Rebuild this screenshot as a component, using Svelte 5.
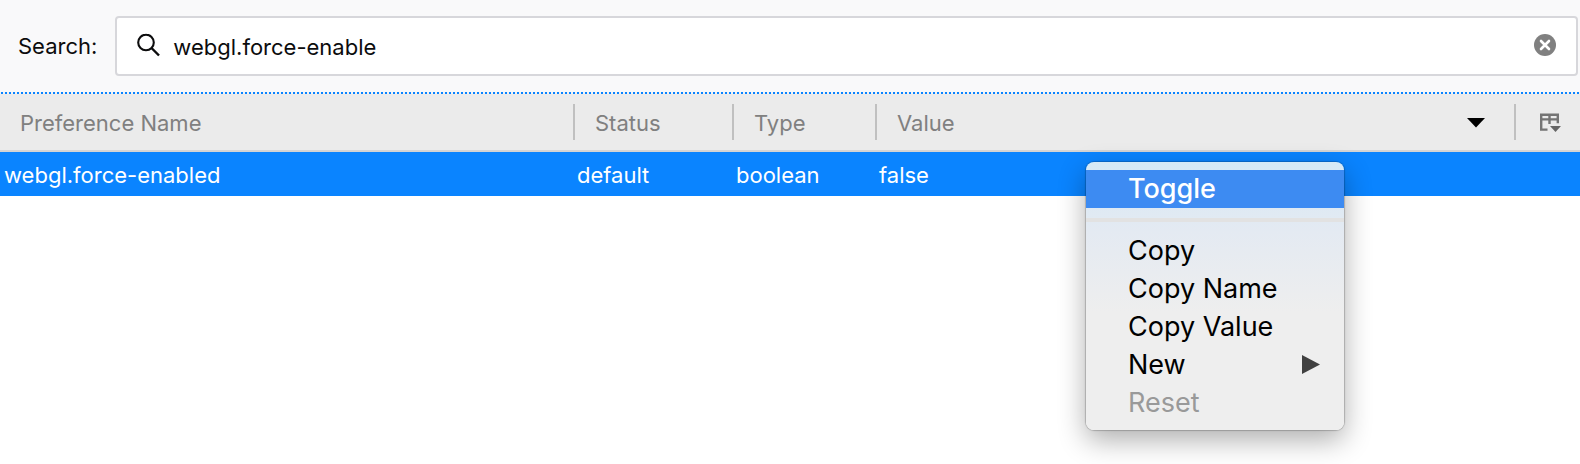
<script>
  let query = $state('webgl.force-enable');
  const rows = [{ name: 'webgl.force-enabled', status: 'default', type: 'boolean', value: 'false' }];
</script>

<main>
  <form class="search" onsubmit={(e) => e.preventDefault()}>
    <label for="query">Search:</label>
    <div class="field">
      <svg width="24" height="24" viewBox="0 0 24 24" aria-hidden="true">
        <circle cx="9" cy="9.5" r="7.8" fill="none" stroke="#0c0c0d" stroke-width="2.1" />
        <path d="M14.5 15l7.5 7.5" stroke="#0c0c0d" stroke-width="2.4" />
      </svg>
      <input id="query" type="text" spellcheck="false" bind:value={query} />
      <button type="button" class="clear" aria-label="Clear" onclick={() => (query = '')}>
        <svg width="22" height="22" viewBox="0 0 22 22">
          <circle cx="11" cy="11" r="11" fill="#808080" />
          <path d="M7 7l8 8M15 7l-8 8" stroke="#fff" stroke-width="2.6" stroke-linecap="round" />
        </svg>
      </button>
    </div>
  </form>

  <div class="focus-line"></div>

  <table>
    <colgroup>
      <col class="c-name" /><col class="c-status" /><col class="c-type" /><col /><col class="c-pick" />
    </colgroup>
    <thead>
      <tr>
        <th><div class="head">Preference Name</div></th>
        <th><div class="head split">Status</div></th>
        <th><div class="head split">Type</div></th>
        <th>
          <div class="head split">
            Value
            <svg width="18" height="10" viewBox="0 0 18 10" aria-hidden="true"><path d="M0 0h18L9 9.5z" /></svg>
          </div>
        </th>
        <th>
          <div class="head split pick">
            <button type="button" aria-label="Select columns to display">
              <svg width="22" height="20" viewBox="0 0 22 20" fill="none" stroke="#747474" stroke-width="2.4">
                <path d="M8.5 17.6H2.2V2.8h16.600v8.500M2 7.400h17M10.500 2.500v9.500" />
                <path d="M11 14h11l-5.500 6z" fill="#666" stroke="none" />
              </svg>
            </button>
          </div>
        </th>
      </tr>
    </thead>
    <tbody>
      {#each rows as row}
        <tr>
          <td>{row.name}</td>
          <td>{row.status}</td>
          <td>{row.type}</td>
          <td>{row.value}</td>
          <td></td>
        </tr>
      {/each}
    </tbody>
  </table>

  <div class="menu" role="menu">
    <button type="button" role="menuitem" class="active">Toggle</button>
    <hr />
    <button type="button" role="menuitem">Copy</button>
    <button type="button" role="menuitem">Copy Name</button>
    <button type="button" role="menuitem">Copy Value</button>
    <button type="button" role="menuitem" aria-haspopup="menu">
      New
      <svg width="18" height="20" viewBox="0 0 18 20" aria-hidden="true"><path d="M0 0L18 9.5L0 19z" fill="#404040" /></svg>
    </button>
    <button type="button" role="menuitem" disabled>Reset</button>
  </div>
</main>

<style>
  :global(body) {
    background: #fff;
  }
  main {
    position: relative;
    min-height: 100vh;
    overflow: hidden;
    font-family: Inter, Roboto, sans-serif;
    font-size: 22px;
    color: #0c0c0d;
  }
  button,
  input {
    font: inherit;
    color: inherit;
    border: 0;
    padding: 0;
    margin: 0;
    background: none;
  }
  svg {
    display: block;
    flex: none;
  }
  .search {
    display: flex;
    align-items: center;
    gap: 18px;
    padding: 16px 2px 16px 18px;
    background: #f9f9fa;
  }
  .field {
    flex: 1;
    display: flex;
    align-items: center;
    box-sizing: border-box;
    height: 60px;
    padding: 0 20px 2px;
    border: 2px solid #d7d7db;
    border-radius: 4px;
    background: #fff;
  }
  input {
    flex: 1;
    min-width: 0;
    height: 50px;
    padding: 4px 12px 0;
    outline: none;
  }
  .focus-line {
    height: 2px;
    background: repeating-linear-gradient(90deg, #f2f2f2 0 1px, #0a84ff 1px 3px, #f2f2f2 3px 4px);
  }
  table {
    width: 100%;
    table-layout: fixed;
    border-collapse: collapse;
  }
  .c-name {
    width: 573px;
  }
  .c-status {
    width: 159px;
  }
  .c-type {
    width: 143px;
  }
  .c-pick {
    width: 66px;
  }
  th {
    height: 56px;
    padding: 0;
    background: #ebebeb;
    color: #808080;
    font-weight: 400;
    text-align: left;
  }
  .head {
    display: flex;
    align-items: center;
    justify-content: space-between;
    box-sizing: border-box;
    height: 36px;
    padding: 2px 29px 0 20px;
    white-space: nowrap;
  }
  .split {
    border-left: 2px solid #c0c0c0;
  }
  .pick {
    justify-content: center;
    padding: 0 0 0 4px;
  }
  tbody {
    border-top: 2px solid #d4d4d4;
  }
  td {
    box-sizing: border-box;
    height: 45px;
    padding: 1px 4px 0;
    background: #0a84ff;
    color: #fff;
    white-space: nowrap;
  }
  .menu {
    position: absolute;
    top: 162px;
    right: 236px;
    width: 258px;
    padding: 8px 0;
    border-radius: 8px;
    overflow: hidden;
    background: linear-gradient(#d5e9f6 0, #e4eaf2 70px, #eeeeee 150px, #eeeeee 100%);
    box-shadow:
      0 0 1px 1px rgba(0, 0, 0, 0.2),
      0 10px 28px rgba(0, 0, 0, 0.32);
    color: #000;
    font-size: 27px;
  }
  .menu button {
    display: flex;
    align-items: center;
    justify-content: space-between;
    width: 100%;
    height: 38px;
    padding: 0 24px 0 42px;
    line-height: 38px;
    text-align: left;
  }
  .menu .active {
    background: #3d8bf2;
    color: #fff;
    font-weight: 500;
  }
  .menu button:disabled {
    color: #999;
  }
  hr {
    height: 4px;
    margin: 10px 0;
    border: 0;
    background: #e2e2e2;
  }
</style>
